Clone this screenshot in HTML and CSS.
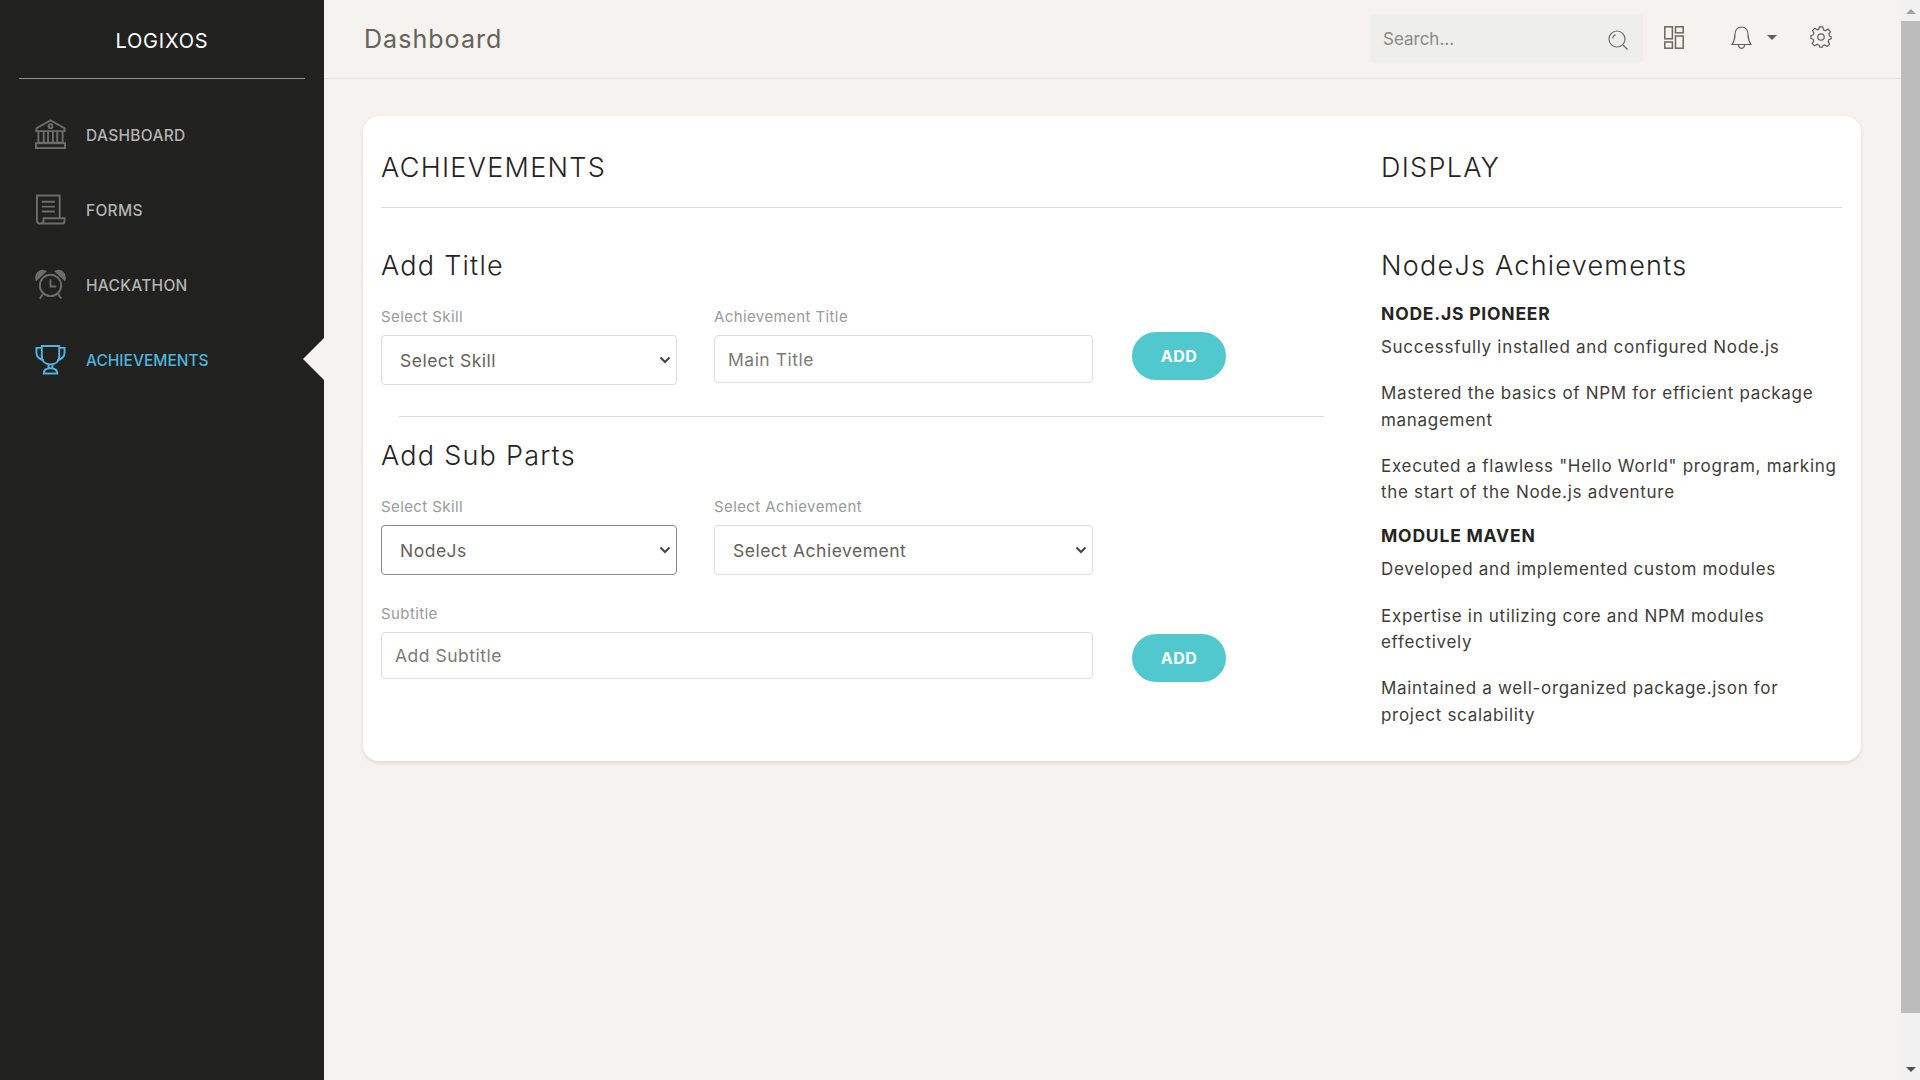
FILE: index.html
```html
<!DOCTYPE html>
<html lang="en">

<head>
    <meta charset="UTF-8">
    <meta name="viewport" content="width=device-width, initial-scale=1.0">
    <title>Logixos</title>
    <link rel="stylesheet" href="styles.css">
</head>

<body>
    <div class="app">
        <aside class="sidebar">
            <div class="brand">LOGIXOS</div>
            <ul class="nav">
                <li class="nav-item">
                    <svg class="nav-icon" viewBox="0 0 32 32" fill="none" stroke="currentColor" stroke-width="2">
                        <path d="M16 1.5 30.5 9.5V12.5H1.500V9.500Z" />
                        <circle cx="16" cy="7.500" r="2" />
                        <path d="M3.500 12.500V24.500H28.500V12.500M9 12.500V24.500M13.500 12.500V24.500M18.500 12.500V24.500M23 12.500V24.500" />
                        <rect x="1" y="25" width="30" height="5" />
                    </svg>
                    <span>DASHBOARD</span>
                </li>
                <li class="nav-item">
                    <svg class="nav-icon" viewBox="0 0 32 32" fill="none" stroke="currentColor" stroke-width="2">
                        <path d="M6 30.500C3.500 30.500 2 29.500 2 27.500V1.500H25.500V25H30.500V27.500C30.500 29.500 29.500 30.500 27.500 30.500H6C8 30.500 9 29 9 25H25.500" />
                        <path d="M7 8H20.500M7 13H20.500M7 18H20.500" />
                    </svg>
                    <span>FORMS</span>
                </li>
                <li class="nav-item">
                    <svg class="nav-icon" viewBox="0 0 32 32" fill="none" stroke="currentColor" stroke-width="2">
                        <circle cx="16" cy="17" r="11" />
                        <path d="M16 10.500V18H22M8 26 5 30.500M24 26 27 30.500" />
                        <path d="M1.500 11C0 5 5 0 10.500 2.500Z M30.500 11C32 5 27 0 21.500 2.500Z" fill="currentColor" />
                    </svg>
                    <span>HACKATHON</span>
                </li>
                <li class="nav-item active">
                    <svg class="nav-icon" viewBox="0 0 32 32" fill="none" stroke="currentColor" stroke-width="2">
                        <path d="M7 2H25V12C25 18 21 21 16 21C11 21 7 18 7 12Z" />
                        <path d="M7 4H1.500V9C1.500 13 4.500 15.500 9 17M25 4H30.500V9C30.500 13 27.500 15.500 23 17" />
                        <path d="M14 21V25H18V21M9 30.500C9 27 11.500 25 16 25C20.500 25 23 27 23 30.500Z" />
                    </svg>
                    <span>ACHIEVEMENTS</span>
                </li>
            </ul>
        </aside>

        <div class="main">
            <header class="topbar">
                <h1 class="page-title">Dashboard</h1>
                <div class="topbar-right">
                    <div class="search">
                        <span class="search-text">Search...</span>
                        <svg class="search-icon" viewBox="0 0 20 20" fill="none" stroke="#6e6e6e" stroke-width="1.200">
                            <circle cx="9" cy="9" r="8" />
                            <path d="M4.500 8.500C4.800 6.500 6 5.200 7.500 4.600" />
                            <path d="M15 15 19.500 19.500" />
                        </svg>
                    </div>
                    <svg class="icon-layout" viewBox="0 0 20 23" fill="none" stroke="#6f675f" stroke-width="1.500">
                        <rect x="0.800" y="0.800" width="7.600" height="12" />
                        <rect x="11.500" y="0.800" width="7.700" height="6" />
                        <rect x="0.800" y="16" width="7.600" height="6.200" />
                        <rect x="11.500" y="10" width="7.700" height="12.200" />
                    </svg>
                    <svg class="icon-bell" viewBox="0 0 21 23" fill="none" stroke="#5f5f5f" stroke-width="1.200">
                        <path d="M10.500 1C6 1 4 4.500 4 8.500C4 13 3.500 15 1 18.500H20C17.500 15 17 13 17 8.500C17 4.500 15 1 10.500 1Z" />
                        <path d="M7.500 18.500C7.500 21 9 22.300 10.500 22.300C12 22.300 13.500 21 13.500 18.500" />
                    </svg>
                    <span class="caret"></span>
                    <svg class="icon-gear" viewBox="0 0 24 24" fill="none" stroke="#5f5f5f" stroke-width="1.300" stroke-linejoin="round">
                        <circle cx="12" cy="12" r="3.500" />
                        <path d="M10 1H14L14.600 4.200 16.800 5.100 19.500 3.300 22.300 6.100 20.500 8.800 21.400 11 23 11.500V14L20.600 14.800 19.800 17 21.300 19.700 18.700 22.300 16 20.600 14 21.500 13.500 23H10.500L9.800 20.800 7.700 20 5 21.600 2.400 19 4.100 16.300 3.200 14.200 1 13.600V10.400L3.400 9.800 4.200 7.700 2.700 5 5.200 2.500 7.900 4.200 9.800 3.400Z" />
                    </svg>
                </div>
            </header>

            <main class="content">
                <section class="card">
                    <div class="card-head">
                        <h2 class="card-title">ACHIEVEMENTS</h2>
                        <h2 class="card-title">DISPLAY</h2>
                    </div>
                    <div class="card-body">
                        <div class="forms">
                            <h3 class="section-title">Add Title</h3>
                            <div class="form-row">
                                <div class="field field-skill">
                                    <label class="field-label">Select Skill</label>
                                    <select class="control select">
                                        <option>Select Skill</option>
                                    </select>
                                </div>
                                <div class="field field-mid">
                                    <label class="field-label">Achievement Title</label>
                                    <input class="control input" type="text" placeholder="Main Title">
                                </div>
                                <button class="btn">ADD</button>
                            </div>

                            <hr class="form-divider">

                            <h3 class="section-title title-sub">Add Sub Parts</h3>
                            <div class="form-row">
                                <div class="field field-skill">
                                    <label class="field-label">Select Skill</label>
                                    <select class="control select select-dark">
                                        <option>NodeJs</option>
                                    </select>
                                </div>
                                <div class="field field-mid">
                                    <label class="field-label">Select Achievement</label>
                                    <select class="control select">
                                        <option>Select Achievement</option>
                                    </select>
                                </div>
                            </div>
                            <div class="form-row row-subtitle">
                                <div class="field field-wide">
                                    <label class="field-label">Subtitle</label>
                                    <input class="control input input-sub" type="text" placeholder="Add Subtitle">
                                </div>
                                <button class="btn btn-low">ADD</button>
                            </div>
                        </div>

                        <div class="display">
                            <h3 class="section-title">NodeJs Achievements</h3>
                            <h4 class="group-title first">NODE.JS PIONEER</h4>
                            <p>Successfully installed and configured Node.js</p>
                            <p>Mastered the basics of NPM for efficient package management</p>
                            <p>Executed a flawless "Hello World" program, marking the start of the Node.js adventure</p>
                            <h4 class="group-title">MODULE MAVEN</h4>
                            <p>Developed and implemented custom modules</p>
                            <p>Expertise in utilizing core and NPM modules effectively</p>
                            <p>Maintained a well-organized package.json for project scalability</p>
                        </div>
                    </div>
                </section>
            </main>
        </div>

        <div class="scrollbar">
            <span class="arrow-up"></span>
            <div class="thumb"></div>
            <span class="arrow-down"></span>
        </div>
    </div>
</body>

</html>
```

FILE: styles.css
```css
* {
    margin: 0;
    padding: 0;
    box-sizing: border-box;
}

body {
    font-family: Inter, "Open Sans", sans-serif;
    background-color: #f4f3ef;
    color: #252422;
    overflow: hidden;
}

.app {
    display: flex;
    height: 1080px;
}

/* sidebar */
.sidebar {
    width: 324px;
    flex-shrink: 0;
    background-color: #212120;
}

.brand {
    height: 79px;
    margin: 0 19px;
    border-bottom: 1px solid #8f8f8d;
    color: #fff;
    font-size: 20px;
    line-height: 83px;
    text-align: center;
    letter-spacing: 0.800px;
}

.nav {
    list-style: none;
    padding-top: 18px;
}

.nav-item {
    position: relative;
    display: flex;
    align-items: center;
    gap: 20px;
    height: 75px;
    padding-left: 35px;
    color: #b4b4b2;
    font-size: 15.500px;
    font-weight: 500;
    letter-spacing: 0.300px;
}

.nav-item span {
    padding-top: 2px;
}

.nav-icon {
    width: 31px;
    height: 31px;
    color: #6c6c6b;
}

.active,
.active .nav-icon {
    color: #4fb5dc;
}

.active {
    letter-spacing: 0;
}

.active::after {
    content: "";
    position: absolute;
    top: 16px;
    right: 0;
    border-top: 21.500px solid transparent;
    border-bottom: 21.500px solid transparent;
    border-right: 21px solid #f4f3ef;
}

/* top bar */
.main {
    flex: 1;
    min-width: 0;
}

.topbar {
    display: flex;
    justify-content: space-between;
    align-items: center;
    height: 79px;
    padding: 0 69px 0 40px;
    border-bottom: 1px solid #e3e3e0;
}

.page-title {
    font-size: 25px;
    font-weight: 400;
    color: #66615b;
    letter-spacing: 1.050px;
}

.topbar-right {
    display: flex;
    align-items: center;
    padding-bottom: 4px;
}

.search {
    display: flex;
    justify-content: space-between;
    align-items: center;
    width: 273px;
    height: 49px;
    margin-top: 3px;
    padding: 0 15px 0 13px;
    background-color: #eeeeeb;
    border-radius: 4px;
}

.search-text {
    padding-top: 1px;
    color: #8a8a88;
    font-size: 17px;
}

.search-icon {
    width: 20px;
    height: 20px;
    margin-top: 2px;
}

.icon-layout {
    width: 20px;
    height: 23px;
    margin-left: 21px;
}

.icon-bell {
    width: 21px;
    height: 23px;
    margin-left: 47px;
}

.caret {
    width: 0;
    height: 0;
    margin-left: 15px;
    border-top: 5px solid #5f5f5f;
    border-left: 5px solid transparent;
    border-right: 5px solid transparent;
}

.icon-gear {
    width: 22px;
    height: 22px;
    margin-left: 33px;
}

/* card */
.content {
    padding: 37px 40px 0 39px;
}

.card {
    padding: 0 19px 33px 18px;
    background-color: #fff;
    border-radius: 16px;
    box-shadow: 0 2px 4px rgba(0, 0, 0, 0.1);
}

.card-head {
    display: grid;
    grid-template-columns: 1000px 1fr;
    height: 92px;
    align-items: center;
    padding-top: 12px;
    border-bottom: 1px solid #dcdcda;
}

.card-title {
    font-size: 27px;
    font-weight: 300;
    letter-spacing: 1.300px;
}

.card-body {
    display: grid;
    grid-template-columns: 1000px 1fr;
}

.section-title {
    margin-top: 41px;
    font-size: 27px;
    font-weight: 300;
    line-height: 34px;
    letter-spacing: 1.250px;
}

.title-sub {
    margin-top: 22px;
}

/* forms */
.form-row {
    display: flex;
    align-items: flex-start;
    margin-top: 23px;
}

.row-subtitle {
    margin-top: 28px;
}

.field-skill {
    width: 296px;
    margin-right: 37px;
}

.field-mid {
    width: 379px;
}

.field-wide {
    width: 712px;
}

.field-label {
    display: block;
    margin-bottom: 8px;
    padding-top: 1px;
    color: #9a9a9a;
    font-size: 15px;
    line-height: 20px;
    letter-spacing: 0.400px;
}

.control {
    display: block;
    width: 100%;
    background-color: #fff;
    border: 1px solid #dddddd;
    border-radius: 4px;
    color: #66615b;
    font-family: inherit;
    font-size: 17.500px;
    letter-spacing: 0.500px;
    outline: none;
}

.select {
    height: 50px;
    padding: 0 20px 0 18px;
    appearance: none;
    background-image: url("data:image/svg+xml,%3Csvg xmlns='http://www.w3.org/2000/svg' viewBox='0 0 12 8'%3E%3Cpath d='M1.500 1.500 6 6 10.500 1.500' fill='none' stroke='%23444' stroke-width='2'/%3E%3C/svg%3E");
    background-repeat: no-repeat;
    background-position: right 5px center;
    background-size: 12px 8px;
}

.select-dark {
    border-color: #888;
}

.input {
    height: 48px;
    padding-left: 13px;
}

.input-sub {
    height: 47px;
}

.input::placeholder {
    color: #7d7a76;
    opacity: 1;
}

.btn {
    width: 94px;
    height: 48px;
    margin: 26px 0 0 39px;
    background-color: #51c8cd;
    border: 0;
    border-radius: 24px;
    color: #fff;
    font-family: inherit;
    font-size: 16px;
    font-weight: 700;
    letter-spacing: 0.400px;
}

.btn-low {
    margin-top: 31px;
}

.form-divider {
    width: 925px;
    height: 1px;
    margin: 31px 0 0 18px;
    background-color: #dcdcda;
    border: 0;
}

/* display column */
.display {
    padding-right: 4px;
}

.display p {
    margin-bottom: 20px;
    color: #403d39;
    font-size: 17px;
    line-height: 26.300px;
    letter-spacing: 0.700px;
}

.display p:last-child {
    margin-bottom: 0;
}

.group-title {
    margin-bottom: 7px;
    margin-top: -2px;
    font-size: 17.500px;
    font-weight: 700;
    line-height: 26px;
    letter-spacing: 0.800px;
}

.group-title.first {
    margin-top: 18px;
}

/* scrollbar */
.scrollbar {
    display: flex;
    flex-direction: column;
    align-items: center;
    width: 19px;
    flex-shrink: 0;
    padding-top: 9px;
    background-color: #f1f1f1;
}

.thumb {
    width: 100%;
    height: 992px;
    margin: 7px 0 54px;
    background-color: #bcbcbc;
}

.arrow-up {
    border-bottom: 5px solid #a3a3a3;
    border-left: 5px solid transparent;
    border-right: 5px solid transparent;
}

.arrow-down {
    border-top: 5px solid #505050;
    border-left: 5px solid transparent;
    border-right: 5px solid transparent;
}
```
